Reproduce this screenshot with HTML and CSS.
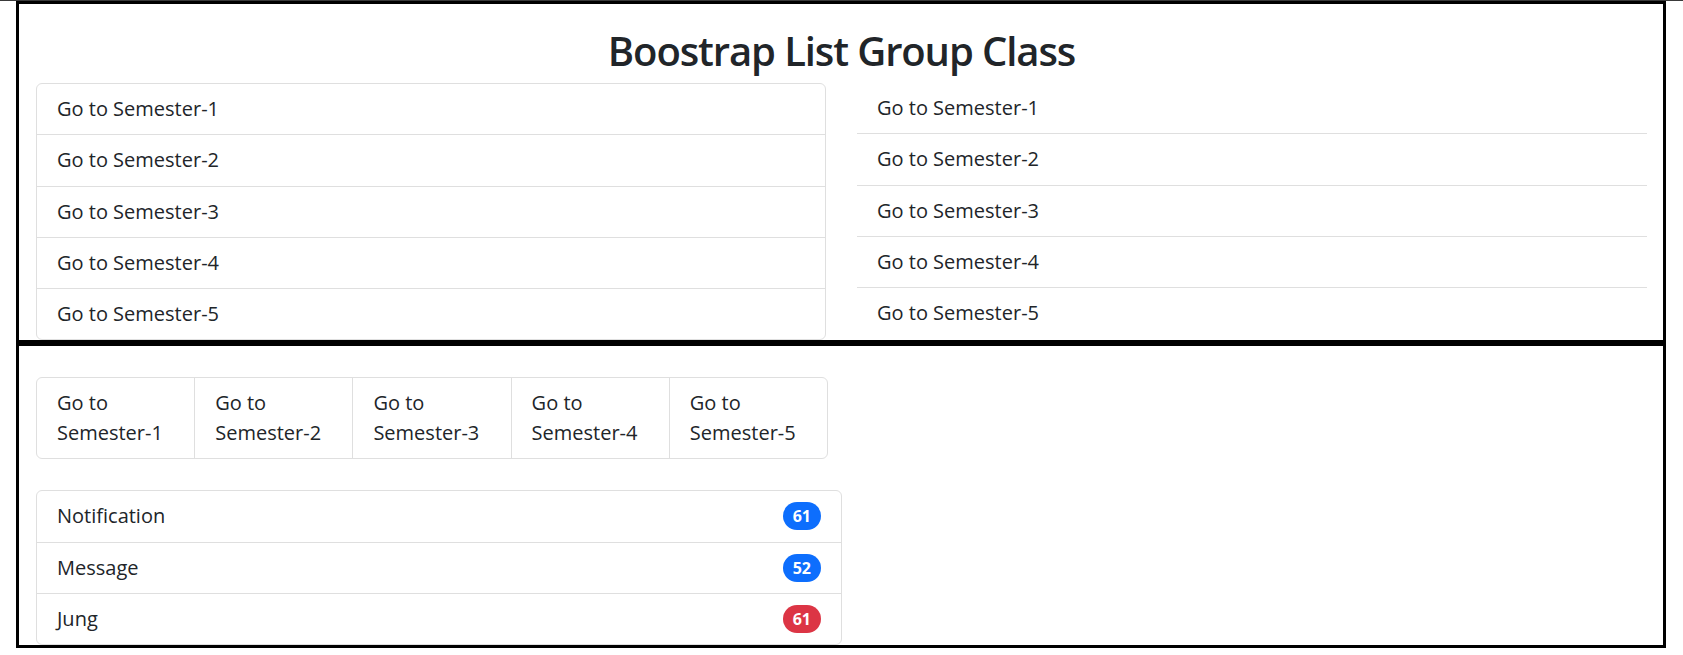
FILE: index.html
```html
<!DOCTYPE html>
<html lang="en">
<head>
<meta charset="utf-8">
<title>Boostrap List Group Class</title>
<link rel="stylesheet" href="styles.css">
</head>
<body>
<div class="topline"></div>
<section class="box box-top">
  <h1 class="title">Boostrap List Group Class</h1>
  <div class="cols">
    <ul class="list">
      <li class="item">Go to Semester-1</li>
      <li class="item">Go to Semester-2</li>
      <li class="item">Go to Semester-3</li>
      <li class="item">Go to Semester-4</li>
      <li class="item">Go to Semester-5</li>
    </ul>
    <ul class="list list-flush">
      <li class="item">Go to Semester-1</li>
      <li class="item">Go to Semester-2</li>
      <li class="item">Go to Semester-3</li>
      <li class="item">Go to Semester-4</li>
      <li class="item">Go to Semester-5</li>
    </ul>
  </div>
</section>
<section class="box box-bottom">
  <ul class="list list-horizontal">
    <li class="item">Go to Semester-1</li>
    <li class="item">Go to Semester-2</li>
    <li class="item">Go to Semester-3</li>
    <li class="item">Go to Semester-4</li>
    <li class="item">Go to Semester-5</li>
  </ul>
  <ul class="list list-badges">
    <li class="item">Notification <span class="badge badge-primary">61</span></li>
    <li class="item">Message <span class="badge badge-primary">52</span></li>
    <li class="item">Jung <span class="badge badge-danger">61</span></li>
  </ul>
</section>
</body>
</html>
```
FILE: styles.css
```css
html, body {
  margin: 0;
  padding: 0;
  background: #fff;
}

body {
  font-family: "Open Sans", "Noto Sans", sans-serif;
  font-size: 20px;
  line-height: 30px;
  color: #212529;
}

.topline {
  height: 1px;
  background: #3a3a3a;
}

.box {
  border: 3px solid #000;
  margin: 0 17px 0 16px;
}

.box-top {
  padding: 0 16px 0 17px;
}

.title {
  margin: 23px 0 8px;
  font-size: 40px;
  line-height: 48px;
  font-weight: 600;
  text-align: center;
  letter-spacing: -1.1px;
}

.cols {
  display: grid;
  grid-template-columns: 1fr 1fr;
  column-gap: 31px;
}

.list {
  list-style: none;
  margin: 0;
  padding: 0;
  display: flex;
  flex-direction: column;
  border: 1px solid #dfdfdf;
  border-radius: 6px;
}

.item {
  padding: 10px 20px;
  line-height: 30.25px;
  border-top: 1px solid #dfdfdf;
}

.item:first-child {
  border-top: none;
}

.list-flush {
  border: none;
  border-radius: 0;
}

.list-flush .item {
  border-top: none;
  border-bottom: 1px solid #dfdfdf;
}

.list-flush .item:last-child {
  border-bottom: none;
}

.box-bottom {
  padding: 31px 0 0 17px;
}

.list-horizontal {
  flex-direction: row;
  width: 790px;
}

.list-horizontal .item {
  flex: 1 1 0;
  min-width: 0;
  line-height: 30px;
  border-top: none;
  border-left: 1px solid #dfdfdf;
}

.list-horizontal .item:first-child {
  border-left: none;
}

.list-badges {
  width: 804px;
  margin-top: 31px;
}

.list-badges .item {
  display: flex;
  justify-content: space-between;
  align-items: center;
}

.badge {
  display: inline-block;
  font-size: 16px;
  line-height: 20px;
  font-weight: 700;
  padding: 4px 10px;
  border-radius: 999px;
  color: #fff;
  text-align: center;
  min-width: 17px;
}

.badge-primary {
  background: #0d6efd;
}

.badge-danger {
  background: #dc3545;
}
```
